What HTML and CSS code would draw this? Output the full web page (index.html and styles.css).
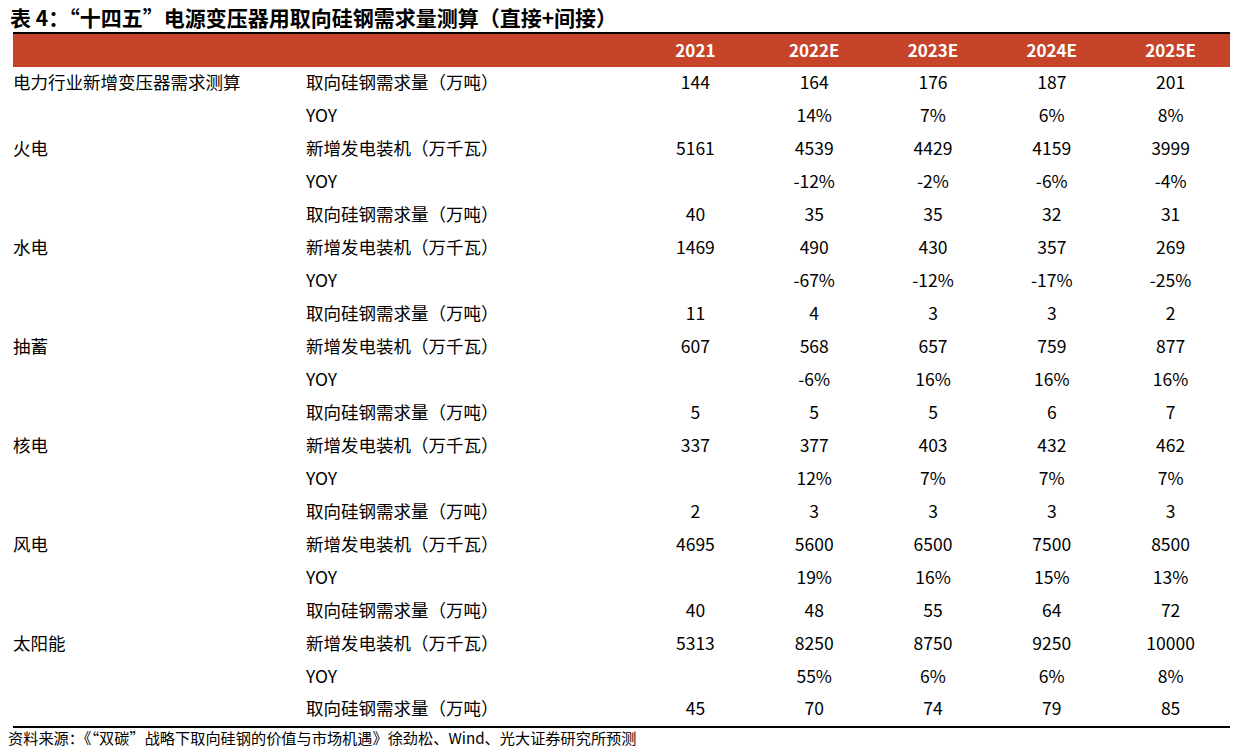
FILE: index.html
```html
<!DOCTYPE html>
<html lang="zh">
<head>
<meta charset="utf-8">
<link rel="stylesheet" href="styles.css">
</head>
<body>
<div class="page">
  <h1 class="title">表 4：“十四五”电源变压器用取向硅钢需求量测算（直接+间接）</h1>
  <table class="data">
    <colgroup>
      <col class="c-cat"><col class="c-item"><col class="c-num"><col class="c-num"><col class="c-num"><col class="c-num"><col class="c-num">
    </colgroup>
    <thead>
      <tr><th></th><th></th><th>2021</th><th>2022E</th><th>2023E</th><th>2024E</th><th>2025E</th></tr>
    </thead>
    <tbody>
      <tr><td class="cat">电力行业新增变压器需求测算</td><td class="item">取向硅钢需求量（万吨）</td><td>144</td><td>164</td><td>176</td><td>187</td><td>201</td></tr>
      <tr><td class="cat"></td><td class="item">YOY</td><td></td><td>14%</td><td>7%</td><td>6%</td><td>8%</td></tr>
      <tr><td class="cat">火电</td><td class="item">新增发电装机（万千瓦）</td><td>5161</td><td>4539</td><td>4429</td><td>4159</td><td>3999</td></tr>
      <tr><td class="cat"></td><td class="item">YOY</td><td></td><td>-12%</td><td>-2%</td><td>-6%</td><td>-4%</td></tr>
      <tr><td class="cat"></td><td class="item">取向硅钢需求量（万吨）</td><td>40</td><td>35</td><td>35</td><td>32</td><td>31</td></tr>
      <tr><td class="cat">水电</td><td class="item">新增发电装机（万千瓦）</td><td>1469</td><td>490</td><td>430</td><td>357</td><td>269</td></tr>
      <tr><td class="cat"></td><td class="item">YOY</td><td></td><td>-67%</td><td>-12%</td><td>-17%</td><td>-25%</td></tr>
      <tr><td class="cat"></td><td class="item">取向硅钢需求量（万吨）</td><td>11</td><td>4</td><td>3</td><td>3</td><td>2</td></tr>
      <tr><td class="cat">抽蓄</td><td class="item">新增发电装机（万千瓦）</td><td>607</td><td>568</td><td>657</td><td>759</td><td>877</td></tr>
      <tr><td class="cat"></td><td class="item">YOY</td><td></td><td>-6%</td><td>16%</td><td>16%</td><td>16%</td></tr>
      <tr><td class="cat"></td><td class="item">取向硅钢需求量（万吨）</td><td>5</td><td>5</td><td>5</td><td>6</td><td>7</td></tr>
      <tr><td class="cat">核电</td><td class="item">新增发电装机（万千瓦）</td><td>337</td><td>377</td><td>403</td><td>432</td><td>462</td></tr>
      <tr><td class="cat"></td><td class="item">YOY</td><td></td><td>12%</td><td>7%</td><td>7%</td><td>7%</td></tr>
      <tr><td class="cat"></td><td class="item">取向硅钢需求量（万吨）</td><td>2</td><td>3</td><td>3</td><td>3</td><td>3</td></tr>
      <tr><td class="cat">风电</td><td class="item">新增发电装机（万千瓦）</td><td>4695</td><td>5600</td><td>6500</td><td>7500</td><td>8500</td></tr>
      <tr><td class="cat"></td><td class="item">YOY</td><td></td><td>19%</td><td>16%</td><td>15%</td><td>13%</td></tr>
      <tr><td class="cat"></td><td class="item">取向硅钢需求量（万吨）</td><td>40</td><td>48</td><td>55</td><td>64</td><td>72</td></tr>
      <tr><td class="cat">太阳能</td><td class="item">新增发电装机（万千瓦）</td><td>5313</td><td>8250</td><td>8750</td><td>9250</td><td>10000</td></tr>
      <tr><td class="cat"></td><td class="item">YOY</td><td></td><td>55%</td><td>6%</td><td>6%</td><td>8%</td></tr>
      <tr><td class="cat"></td><td class="item">取向硅钢需求量（万吨）</td><td>45</td><td>70</td><td>74</td><td>79</td><td>85</td></tr>
    </tbody>
  </table>
  <p class="source">资料来源：《“双碳”战略下取向硅钢的价值与市场机遇》徐劲松、Wind、光大证券研究所预测</p>
</div>
</body>
</html>
```

FILE: styles.css
```css
html, body {
  margin: 0;
  padding: 0;
  background: #ffffff;
}

body {
  font-family: "Noto Sans CJK SC", "Noto Sans", sans-serif;
  color: #000000;
}

.page {
  width: 1240px;
  padding: 0;
}

.title {
  margin: 0;
  padding: 4px 0 0 10px;
  height: 28px;
  box-sizing: border-box;
  font-size: 21px;
  line-height: 26px;
  font-weight: 700;
  color: #000000;
  letter-spacing: 0;
  white-space: nowrap;
}

.data {
  margin-left: 13px;
  margin-top: 4px;
  width: 1217px;
  border-collapse: collapse;
  table-layout: fixed;
  border-top: 2px solid #000000;
  border-bottom: 2px solid #000000;
}

.c-cat { width: 292px; }
.c-item { width: 331px; }
.c-num { width: 118.8px; }

.data th {
  background: #c5442a;
  color: #ffffff;
  font-weight: 700;
  font-size: 17px;
  height: 34px;
  padding: 0 0 2px 0;
  text-align: center;
  vertical-align: middle;
  box-sizing: border-box;
}

.data td {
  height: 33px;
  padding: 0 0 4px 0;
  box-sizing: border-box;
  font-size: 17.5px;
  line-height: 24px;
  text-align: center;
  vertical-align: middle;
  white-space: nowrap;
}

.data td.cat {
  text-align: left;
  padding-left: 0;
}

.data td.item {
  text-align: left;
  padding-left: 1px;
}

.source {
  margin: 0;
  padding: 0 0 0 8px;
  font-size: 15.2px;
  line-height: 19px;
  color: #000000;
}
```
